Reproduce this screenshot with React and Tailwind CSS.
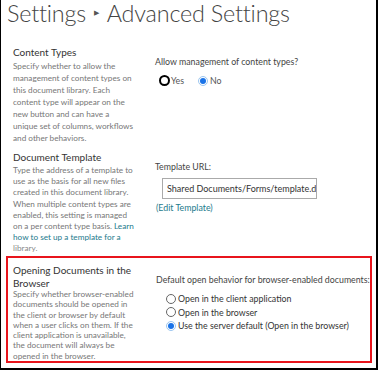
import React from "react";

const F = { fontFamily: "Lato, 'Open Sans', sans-serif" };

function Lines({ lines, className }) {
  return (
    <div className={className}>
      {lines.map((l, i) => (
        <div key={i} className="whitespace-nowrap">{l}</div>
      ))}
    </div>
  );
}

function Radio({ checked, focus }) {
  if (focus) {
    return <span className="inline-block w-[11px] h-[11px] rounded-full border-[2.5px] border-black bg-white" />;
  }
  if (checked) {
    return (
      <span className="inline-flex items-center justify-center w-[10px] h-[10px] rounded-full border border-[#9cc6f0] bg-white">
        <span className="w-[6px] h-[6px] rounded-full bg-[#1a73e8]" />
      </span>
    );
  }
  return <span className="inline-block w-[10px] h-[10px] rounded-full border border-[#666] bg-white" />;
}

export default function App() {
  return (
    <div
      style={F}
      className="w-[378px] h-[370px] bg-white border-l border-r-2 border-b-2 border-black overflow-hidden text-[#444]"
    >
      <div className="pl-[6px] h-[27px] flex items-center gap-[8px] text-[23.4px] font-light text-[#444] leading-none tracking-[-0.2px]">
        <span>Settings</span>
        <span className="text-[6.5px] text-[#555]">▶</span>
        <span>Advanced Settings</span>
      </div>

      {/* Content Types */}
      <div className="flex mt-[18px] h-[105px]">
        <div className="w-[149px] pl-[12px]">
          <div className="text-[10px] text-[#333] leading-[14px]">Content Types</div>
          <Lines
            className="text-[8.2px] leading-[12px] text-[#777] mt-[1px]"
            lines={[
              "Specify whether to allow the",
              "management of content types on",
              "this document library. Each",
              "content type will appear on the",
              "new button and can have a",
              "unique set of columns, workflows",
              "and other behaviors.",
            ]}
          />
        </div>
        <div className="pt-[10px] pl-[5px]">
          <div className="text-[8.8px] text-[#444] leading-[13px]">Allow management of content types?</div>
          <div className="flex items-center mt-[6px] pl-[4px] text-[8.8px] text-[#555]">
            <Radio focus />
            <span className="ml-[1px]">Yes</span>
            <span className="ml-[14px]"><Radio checked /></span>
            <span className="ml-[2px]">No</span>
          </div>
        </div>
      </div>

      {/* Document Template */}
      <div className="flex h-[106px]">
        <div className="w-[149px] pl-[12px]">
          <div className="text-[10px] text-[#333] leading-[14px]">Document Template</div>
          <div className="text-[8.2px] leading-[11.2px] text-[#777] mt-[1px]">
            <div className="whitespace-nowrap">Type the address of a template to</div>
            <div className="whitespace-nowrap">use as the basis for all new files</div>
            <div className="whitespace-nowrap">created in this document library.</div>
            <div className="whitespace-nowrap">When multiple content types are</div>
            <div className="whitespace-nowrap">enabled, this setting is managed</div>
            <div className="whitespace-nowrap">on a per content type basis. <span className="text-[#1c7a8c]">Learn</span></div>
            <div className="whitespace-nowrap text-[#1c7a8c]">how to set up a template for a</div>
            <div className="whitespace-nowrap text-[#888]">library.</div>
          </div>
        </div>
        <div className="pt-[10px] pl-[5px]">
          <div className="text-[8.8px] text-[#444] leading-[13px]">Template URL:</div>
          <div className="mt-[5px] ml-[7px] w-[155px] h-[21px] border border-[#aaa] bg-white overflow-hidden flex items-center pl-[4px]">
            <span className="whitespace-nowrap text-[9px] text-[#333]">Shared Documents/Forms/template.docx</span>
          </div>
          <div className="ml-[1px] mt-[2px] text-[8.8px] text-[#1c7a8c] leading-[13px]">(Edit Template)</div>
        </div>
      </div>

      {/* Opening Documents */}
      <div className="ml-[5px] mr-[4px] h-[107px] border-2 border-[#e8141c] flex">
        <div className="w-[148px] pl-[5px] pt-[6px]">
          <div className="text-[10px] text-[#333] leading-[12.5px]">
            <div className="whitespace-nowrap">Opening Documents in the</div>
            <div>Browser</div>
          </div>
          <Lines
            className="text-[8.2px] leading-[10.3px] text-[#777]"
            lines={[
              "Specify whether browser-enabled",
              "documents should be opened in",
              "the client or browser by default",
              "when a user clicks on them. If the",
              "client application is unavailable,",
              "the document will always be",
              "opened in the browser.",
            ]}
          />
        </div>
        <div className="pt-[15px]">
          <div className="whitespace-nowrap text-[8.8px] text-[#444] leading-[13px]">Default open behavior for browser-enabled documents:</div>
          <div className="mt-[6px] pl-[10px] text-[8.8px] text-[#333] leading-[13.5px]">
            <div className="flex items-center gap-[2px]"><Radio /><span>Open in the client application</span></div>
            <div className="flex items-center gap-[2px]"><Radio /><span>Open in the browser</span></div>
            <div className="flex items-center gap-[2px]"><Radio checked /><span>Use the server default (Open in the browser)</span></div>
          </div>
        </div>
      </div>
    </div>
  );
}
